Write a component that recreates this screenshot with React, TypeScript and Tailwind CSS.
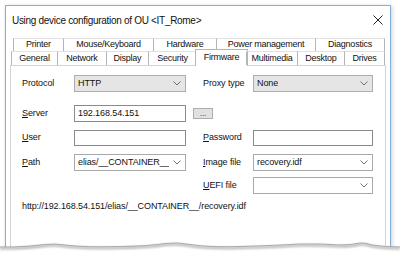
import React from "react";

const Chevron = () => (
  <svg width="8" height="5" viewBox="0 0 8 5" className="shrink-0">
    <polyline points="0.5,0.5 4,4 7.5,0.5" fill="none" stroke="#707070" strokeWidth="1" />
  </svg>
);

function Select({ value, gray, className }: { value: string; gray?: boolean; className: string }) {
  return (
    <div
      className={
        "flex items-center justify-between pl-[3px] pr-[4px] border " +
        (gray ? "bg-[#e5e5e5] border-[#adadad] " : "bg-white border-[#a9a9a9] ") +
        className
      }
    >
      <span className="truncate">{value}</span>
      <Chevron />
    </div>
  );
}

const row1 = [
  { t: "Printer", w: 50 },
  { t: "Mouse/Keyboard", w: 90 },
  { t: "Hardware", w: 63 },
  { t: "Power management", w: 99 },
  { t: "Diagnostics", w: 70 },
];
const row2 = [
  { t: "General", w: 46 },
  { t: "Network", w: 49 },
  { t: "Display", w: 42 },
  { t: "Security", w: 48 },
  { t: "Firmware", w: 50, sel: true },
  { t: "Multimedia", w: 51 },
  { t: "Desktop", w: 47 },
  { t: "Drives", w: 41 },
];

export default function App() {
  return (
    <div className="w-[400px] h-[257px] bg-white relative overflow-hidden pt-[5px] pl-[5px] font-['Liberation_Sans',Arial,sans-serif] text-black">
      <div className="w-[386px] h-[246px] border border-[#7fb0e0] bg-white flex flex-col shadow-[1px_1px_4px_rgba(0,0,0,0.2)]">
        {/* title bar */}
        <div className="h-[28px] flex items-center justify-between pl-[6px] pr-[7px] shrink-0">
          <span className="text-[10px] tracking-[-0.3px] text-[#111]">Using device configuration of OU &lt;IT_Rome&gt;</span>
          <svg width="10" height="10" viewBox="0 0 10 10">
            <line x1="0.5" y1="0.5" x2="9.5" y2="9.5" stroke="#222" strokeWidth="1" />
            <line x1="9.5" y1="0.5" x2="0.5" y2="9.5" stroke="#222" strokeWidth="1" />
          </svg>
        </div>
        {/* tabs + panel */}
        <div className="flex-1 flex flex-col mt-[4px] ml-[4px] mr-[4px] text-[9px] text-[#111]">
          <div className="flex h-[13px] ml-[3px] tracking-[-0.25px]">
            {row1.map((t, i) => (
              <div
                key={t.t}
                style={{ width: t.w }}
                className={
                  "flex items-center justify-center border-t border-t-[#e2e2e2] border-l border-l-[#b5b5b5] " +
                  (i === row1.length - 1 ? "border-r border-r-[#b5b5b5]" : "")
                }
              >
                {t.t}
              </div>
            ))}
          </div>
          <div className="flex h-[14px] ml-[1px] relative z-10 tracking-[-0.25px]">
            {row2.map((t, i) => (
              <div
                key={t.t}
                style={{ width: t.w }}
                className={
                  "relative flex items-center justify-center border-t border-t-[#e2e2e2] border-l border-l-[#b5b5b5] " +
                  (i === row2.length - 1 ? "border-r border-r-[#b5b5b5]" : "")
                }
              >
                {t.sel ? (
                  <div className="absolute left-[-2px] right-[-2px] top-[-3px] bottom-[-1px] bg-white border border-[#b5b5b5] border-b-0 flex items-start justify-center pt-[1px]">
                    {t.t}
                  </div>
                ) : (
                  t.t
                )}
              </div>
            ))}
          </div>
          <div className="flex-1 border border-[#d4d4d4] border-b-0 pl-[11px] flex flex-col tracking-[-0.1px]">
            {/* Protocol */}
            <div className="flex items-center mt-[9px] h-[17px]">
              <div className="w-[52px]">Protocol</div>
              <Select value="HTTP" gray className="w-[112px] h-[17px]" />
              <div className="w-[17px]" />
              <div className="w-[50px]">Proxy type</div>
              <Select value="None" gray className="w-[120px] h-[17px]" />
            </div>
            {/* Server */}
            <div className="flex items-center mt-[13px] h-[17px]">
              <div className="w-[52px]">
                <span className="underline">S</span>erver
              </div>
              <div className="w-[112px] h-[17px] border border-[#8a8a8a] bg-white flex items-center pl-[3px]">
                192.168.54.151
              </div>
              <div className="ml-[7px] w-[20px] h-[11px] bg-[#e1e1e1] border border-[#adadad] flex items-end justify-center leading-[8px] text-[8px]">
                ...
              </div>
            </div>
            {/* User */}
            <div className="flex items-center mt-[8px] h-[16px]">
              <div className="w-[52px]">
                <span className="underline">U</span>ser
              </div>
              <div className="w-[112px] h-[16px] border border-[#8a8a8a] bg-white" />
              <div className="w-[17px]" />
              <div className="w-[50px]">
                <span className="underline">P</span>assword
              </div>
              <div className="w-[120px] h-[16px] border border-[#8a8a8a] bg-white" />
            </div>
            {/* Path */}
            <div className="flex items-center mt-[8px] h-[17px]">
              <div className="w-[52px]">
                <span className="underline">P</span>ath
              </div>
              <Select value="elias/__CONTAINER__" className="w-[112px] h-[17px]" />
              <div className="w-[17px]" />
              <div className="w-[50px]">
                <span className="underline">I</span>mage file
              </div>
              <Select value="recovery.idf" className="w-[120px] h-[17px]" />
            </div>
            {/* UEFI */}
            <div className="flex items-center mt-[6px] h-[17px]">
              <div className="w-[52px]" />
              <div className="w-[112px]" />
              <div className="w-[17px]" />
              <div className="w-[50px]">
                <span className="underline">U</span>EFI file
              </div>
              <Select value="" className="w-[120px] h-[17px]" />
            </div>
            <div className="mt-[6px] leading-[12px]">http://192.168.54.151/elias/__CONTAINER__/recovery.idf</div>
          </div>
        </div>
      </div>
      {/* torn edge */}
      <svg className="absolute left-0 top-[234px]" width="400" height="23" viewBox="0 0 400 23">
        <defs>
          <filter id="blur" x="-5%" y="-100%" width="110%" height="300%">
            <feGaussianBlur stdDeviation="1.3" />
          </filter>
        </defs>
        <path
          d="M0,13 L12,13 Q30,12.5 45,10.5 Q55,9.5 65,11 Q85,13.5 120,12.5 Q150,12 165,9.5 Q178,8 190,10.5 Q210,13.5 240,12.5 Q275,11.5 300,10 Q320,9.5 340,11 Q352,11 360,9 Q366,8.5 372,11 Q385,13 400,13 L400,23 L0,23 Z"
          fill="white"
        />
        <path
          d="M0,14.5 L12,14.5 Q30,14 45,12 Q55,11 65,12.5 Q85,15 120,14 Q150,13.5 165,11 Q178,9.5 190,12 Q210,15 240,14 Q275,13 300,11.5 Q320,11 340,12.5 Q352,12.5 360,10.5 Q366,10 372,12.5 Q385,14.5 400,14.5"
          fill="none"
          stroke="#6b6b6b"
          strokeWidth="2"
          opacity="0.55"
          filter="url(#blur)"
        />
        <path
          d="M0,13 L12,13 Q30,12.5 45,10.5 Q55,9.5 65,11 Q85,13.5 120,12.5 Q150,12 165,9.5 Q178,8 190,10.5 Q210,13.5 240,12.5 Q275,11.5 300,10 Q320,9.5 340,11 Q352,11 360,9 Q366,8.5 372,11 Q385,13 400,13"
          fill="none"
          stroke="#9a9a9a"
          strokeWidth="0.8"
        />
      </svg>
    </div>
  );
}
